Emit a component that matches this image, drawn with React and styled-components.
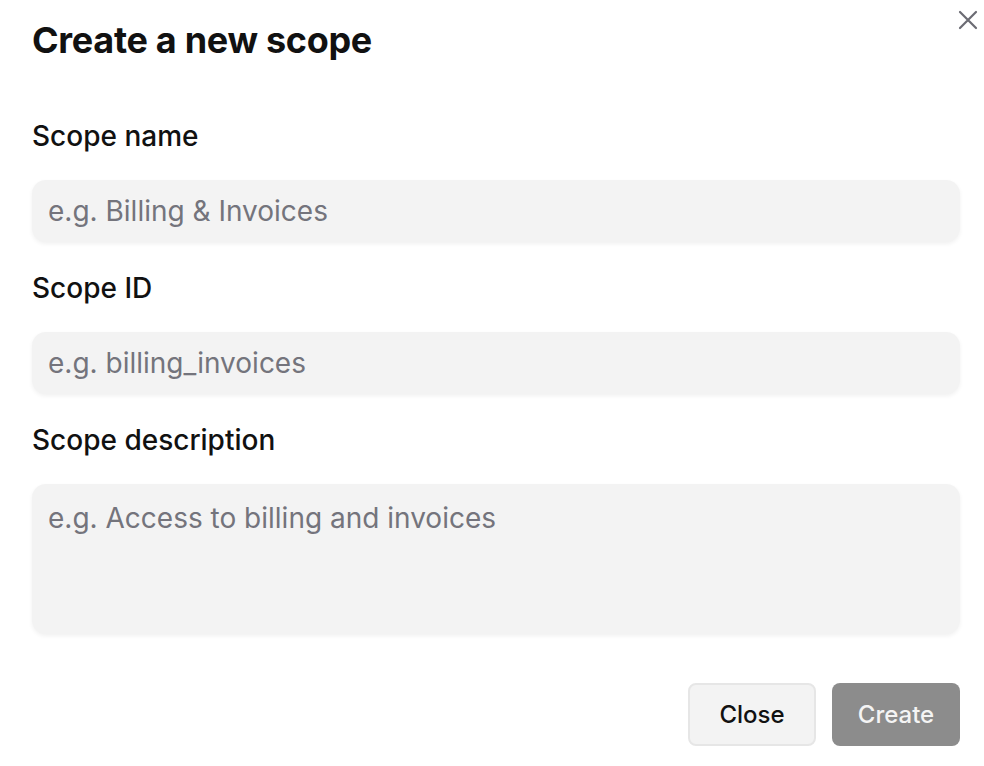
import React from 'react';
import styled, { createGlobalStyle } from 'styled-components';

const GlobalStyle = createGlobalStyle`
  body {
    margin: 0;
    background: #ffffff;
    font-family: Inter, "Noto Sans", sans-serif;
  }
`;

const Dialog = styled.div`
  position: relative;
  width: 984px;
  height: 766px;
  box-sizing: border-box;
  padding: 16px 24px 0 32px;
  display: flex;
  flex-direction: column;
`;

const Title = styled.h1`
  margin: 0;
  font-size: 36px;
  line-height: 48px;
  font-weight: 700;
  color: #111111;
  letter-spacing: -0.3px;
`;

const CloseIcon = styled.button`
  position: absolute;
  top: 6px;
  right: 2px;
  width: 28px;
  height: 28px;
  padding: 0;
  border: none;
  background: none;
  color: #6b6b73;
  display: flex;
  align-items: center;
  justify-content: center;
  cursor: pointer;
`;

const Form = styled.form`
  display: flex;
  flex-direction: column;
  margin-top: 54px;
`;

const Field = styled.div`
  display: flex;
  flex-direction: column;
  gap: 26px;
  margin-bottom: 28px;
`;

const Label = styled.label`
  font-size: 28px;
  line-height: 36px;
  font-weight: 500;
  color: #111111;
`;

const inputBase = `
  box-sizing: border-box;
  width: 100%;
  border: none;
  outline: none;
  border-radius: 14px;
  background: #f3f3f3;
  box-shadow: 0 2px 4px rgba(0, 0, 0, 0.06);
  font-family: Inter, "Noto Sans", sans-serif;
  font-size: 28px;
  color: #222;
  padding: 0 16px;
  &::placeholder {
    color: #74747c;
  }
`;

const Input = styled.input`
  ${inputBase}
  height: 62px;
`;

const TextArea = styled.textarea`
  ${inputBase}
  height: 150px;
  padding-top: 17px;
  line-height: 34px;
  resize: none;
`;

const Actions = styled.div`
  display: flex;
  justify-content: flex-end;
  gap: 16px;
  margin-top: 21px;
`;

const Button = styled.button`
  box-sizing: border-box;
  width: 128px;
  height: 63px;
  border-radius: 8px;
  font-family: Inter, "Noto Sans", sans-serif;
  font-size: 24px;
  font-weight: 500;
  cursor: pointer;
  border: ${(p) => (p.$primary ? 'none' : '2px solid #e6e6e6')};
  background: ${(p) => (p.$primary ? '#8c8c8c' : '#f3f3f3')};
  color: ${(p) => (p.$primary ? '#f4f4f4' : '#111111')};
`;

export default function App() {
  return (
    <>
      <GlobalStyle />
      <Dialog>
        <Title>Create a new scope</Title>
        <CloseIcon type="button" aria-label="Close">
          <svg width="22" height="22" viewBox="0 0 22 22" fill="none" stroke="currentColor" strokeWidth="2.2" strokeLinecap="round">
            <path d="M3 3L19 19M19 3L3 19" />
          </svg>
        </CloseIcon>
        <Form onSubmit={(e) => e.preventDefault()}>
          <Field>
            <Label>Scope name</Label>
            <Input placeholder="e.g. Billing & Invoices" />
          </Field>
          <Field>
            <Label>Scope ID</Label>
            <Input placeholder="e.g. billing_invoices" />
          </Field>
          <Field>
            <Label>Scope description</Label>
            <TextArea placeholder="e.g. Access to billing and invoices" />
          </Field>
          <Actions>
            <Button type="button">Close</Button>
            <Button type="submit" $primary>Create</Button>
          </Actions>
        </Form>
      </Dialog>
    </>
  );
}
